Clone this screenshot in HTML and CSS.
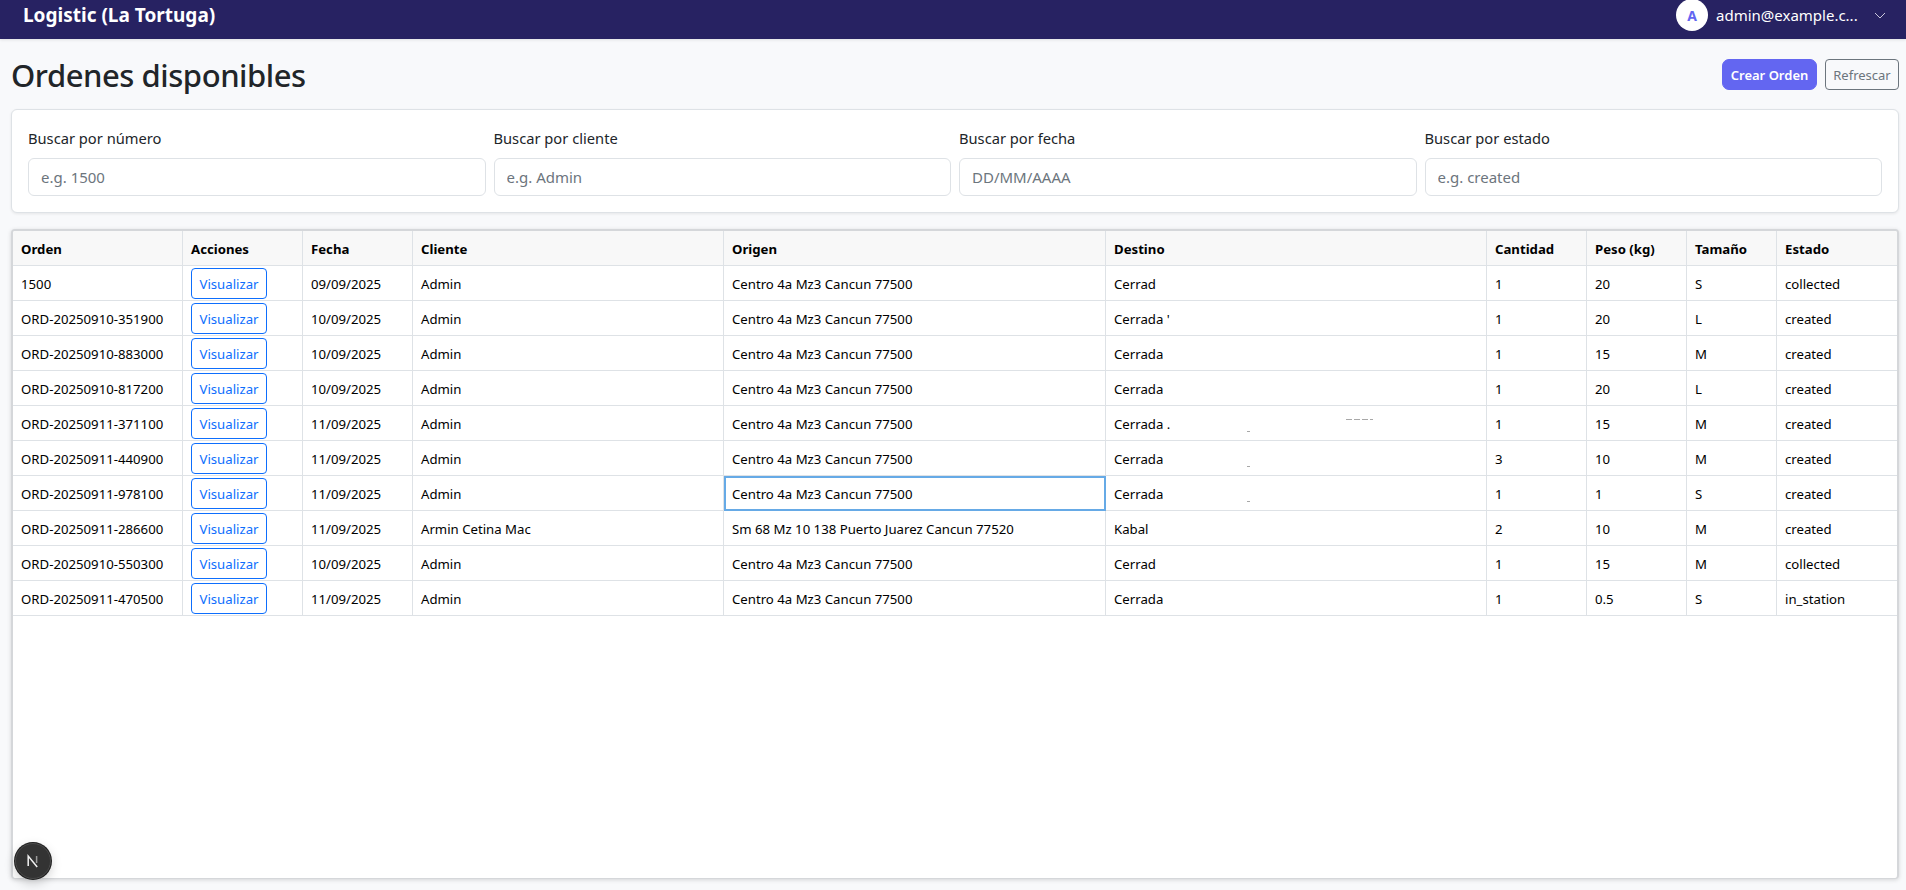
FILE: index.html
```html
<!DOCTYPE html>
<html lang="es">
<head>
    <meta charset="UTF-8">
    <meta name="viewport" content="width=device-width, initial-scale=1.0">
    <title>Logistic (La Tortuga)</title>
    <link rel="stylesheet" href="styles.css">
</head>
<body>
    <nav class="navbar">
        <div class="brand">Logistic (La Tortuga)</div>
        <div class="user-menu">
            <span class="avatar">A</span>
            <span class="user-email">admin@example.c...</span>
            <svg class="chevron" width="12" height="7" viewBox="0 0 12 7" fill="none" stroke="#c9c8dc" stroke-width="1"><path d="M1 1l5 5 5-5"/></svg>
        </div>
    </nav>

    <main class="page">
        <div class="page-header">
            <h1>Ordenes disponibles</h1>
            <div class="page-actions">
                <button class="btn-create">Crear Orden</button>
                <button class="btn-refresh">Refrescar</button>
            </div>
        </div>

        <div class="filters">
            <div class="filter-group">
                <label for="f-numero">Buscar por número</label>
                <input id="f-numero" type="text" placeholder="e.g. 1500">
            </div>
            <div class="filter-group">
                <label for="f-cliente">Buscar por cliente</label>
                <input id="f-cliente" type="text" placeholder="e.g. Admin">
            </div>
            <div class="filter-group">
                <label for="f-fecha">Buscar por fecha</label>
                <input id="f-fecha" type="text" placeholder="DD/MM/AAAA">
            </div>
            <div class="filter-group">
                <label for="f-estado">Buscar por estado</label>
                <input id="f-estado" type="text" placeholder="e.g. created">
            </div>
        </div>

        <div class="grid-card">
            <table class="orders">
                <colgroup>
                    <col class="c-orden"><col class="c-acciones"><col class="c-fecha"><col class="c-cliente">
                    <col class="c-origen"><col class="c-destino"><col class="c-cantidad"><col class="c-peso">
                    <col class="c-tamano"><col class="c-estado">
                </colgroup>
                <thead>
                    <tr>
                        <th>Orden</th><th>Acciones</th><th>Fecha</th><th>Cliente</th><th>Origen</th>
                        <th>Destino</th><th>Cantidad</th><th>Peso (kg)</th><th>Tamaño</th><th>Estado</th>
                    </tr>
                </thead>
                <tbody>
                    <tr><td>1500</td><td class="actions"><button class="btn-view">Visualizar</button></td><td>09/09/2025</td><td>Admin</td><td>Centro 4a Mz3 Cancun 77500</td><td>Cerrad</td><td>1</td><td>20</td><td>S</td><td>collected</td></tr>
                    <tr><td>ORD-20250910-351900</td><td class="actions"><button class="btn-view">Visualizar</button></td><td>10/09/2025</td><td>Admin</td><td>Centro 4a Mz3 Cancun 77500</td><td>Cerrada '</td><td>1</td><td>20</td><td>L</td><td>created</td></tr>
                    <tr><td>ORD-20250910-883000</td><td class="actions"><button class="btn-view">Visualizar</button></td><td>10/09/2025</td><td>Admin</td><td>Centro 4a Mz3 Cancun 77500</td><td>Cerrada</td><td>1</td><td>15</td><td>M</td><td>created</td></tr>
                    <tr><td>ORD-20250910-817200</td><td class="actions"><button class="btn-view">Visualizar</button></td><td>10/09/2025</td><td>Admin</td><td>Centro 4a Mz3 Cancun 77500</td><td>Cerrada</td><td>1</td><td>20</td><td>L</td><td>created</td></tr>
                    <tr><td>ORD-20250911-371100</td><td class="actions"><button class="btn-view">Visualizar</button></td><td>11/09/2025</td><td>Admin</td><td>Centro 4a Mz3 Cancun 77500</td><td class="dest">Cerrada .<i class="speck speck-low"></i><i class="speck speck-top"></i></td><td>1</td><td>15</td><td>M</td><td>created</td></tr>
                    <tr><td>ORD-20250911-440900</td><td class="actions"><button class="btn-view">Visualizar</button></td><td>11/09/2025</td><td>Admin</td><td>Centro 4a Mz3 Cancun 77500</td><td class="dest">Cerrada<i class="speck speck-low"></i></td><td>3</td><td>10</td><td>M</td><td>created</td></tr>
                    <tr><td>ORD-20250911-978100</td><td class="actions"><button class="btn-view">Visualizar</button></td><td>11/09/2025</td><td>Admin</td><td class="focused">Centro 4a Mz3 Cancun 77500</td><td class="dest">Cerrada<i class="speck speck-low"></i></td><td>1</td><td>1</td><td>S</td><td>created</td></tr>
                    <tr><td>ORD-20250911-286600</td><td class="actions"><button class="btn-view">Visualizar</button></td><td>11/09/2025</td><td>Armin Cetina Mac</td><td>Sm 68 Mz 10 138 Puerto Juarez Cancun 77520</td><td>Kabal</td><td>2</td><td>10</td><td>M</td><td>created</td></tr>
                    <tr><td>ORD-20250910-550300</td><td class="actions"><button class="btn-view">Visualizar</button></td><td>10/09/2025</td><td>Admin</td><td>Centro 4a Mz3 Cancun 77500</td><td>Cerrad</td><td>1</td><td>15</td><td>M</td><td>collected</td></tr>
                    <tr><td>ORD-20250911-470500</td><td class="actions"><button class="btn-view">Visualizar</button></td><td>11/09/2025</td><td>Admin</td><td>Centro 4a Mz3 Cancun 77500</td><td>Cerrada</td><td>1</td><td>0.5</td><td>S</td><td>in_station</td></tr>
                </tbody>
            </table>
        </div>
    </main>

    <div class="dev-badge">
        <svg width="16" height="16" viewBox="0 0 16 16" fill="none"><path d="M3.2 13V3l9 11" stroke="#f2f2f2" stroke-width="1.5"/><path d="M11.6 3v7" stroke="#9a9a9a" stroke-width="1.5"/></svg>
    </div>
</body>
</html>
```

FILE: styles.css
```css
* {
    margin: 0;
    padding: 0;
    box-sizing: border-box;
}

html, body {
    height: 100%;
    overflow: hidden;
}

body {
    font-family: 'Noto Sans', 'Open Sans', sans-serif;
    background: #f8f9fb;
    color: #212529;
    display: flex;
    flex-direction: column;
}

.navbar {
    height: 39px;
    flex-shrink: 0;
    background: #272262;
    color: #fff;
    display: flex;
    align-items: center;
    justify-content: space-between;
    padding: 0 20px 9px 23px;
    box-shadow: 0 1px 3px rgba(0, 0, 0, 0.1);
}

.brand {
    font-size: 19px;
    font-weight: 700;
}

.user-menu {
    display: flex;
    align-items: center;
    font-size: 15px;
}

.avatar {
    width: 32px;
    height: 32px;
    border-radius: 50%;
    background: #fff;
    color: #6366f1;
    font-size: 14px;
    font-weight: 700;
    display: flex;
    align-items: center;
    justify-content: center;
    margin-right: 8px;
}

.user-email {
    width: 141px;
    white-space: nowrap;
    margin-right: 17px;
}

.page {
    flex: 1;
    min-height: 0;
    display: flex;
    flex-direction: column;
    padding: 20px 7px 11px 11px;
}

.page-header {
    height: 31px;
    display: flex;
    align-items: center;
    justify-content: space-between;
    margin-bottom: 19px;
}

.page-header h1 {
    font-size: 31px;
    font-weight: 500;
    line-height: 1.2;
    letter-spacing: -0.45px;
    margin-top: 2px;
}

.page-actions {
    display: flex;
    gap: 8px;
}

.page-actions button {
    height: 31px;
    font-family: inherit;
    font-size: 13px;
    white-space: nowrap;
    border-radius: 7px;
}

.btn-create {
    width: 95px;
    background: #6366f1;
    border: 1px solid #6366f1;
    color: #fff;
    font-weight: 600;
}

.btn-refresh {
    width: 74px;
    background: transparent;
    border: 1px solid #6c757d;
    color: #6c757d;
    border-radius: 4px !important;
}

.filters {
    height: 104px;
    background: #fff;
    border: 1px solid #dee2e6;
    border-radius: 6px;
    box-shadow: 0 1px 3px rgba(0, 0, 0, 0.08);
    padding: 16px 16px 0;
    display: grid;
    grid-template-columns: repeat(4, 1fr);
    gap: 8px;
    margin-bottom: 16px;
}

.filter-group label {
    display: block;
    font-size: 14.7px;
    line-height: 24px;
    margin-bottom: 8px;
}

.filter-group input {
    width: 100%;
    height: 38px;
    font-family: inherit;
    font-size: 15px;
    padding: 0 12px;
    border: 1px solid #dee2e6;
    border-radius: 6px;
    background: #fff;
    outline: none;
}

.filter-group input::placeholder {
    color: #6c757d;
    opacity: 1;
}

.grid-card {
    flex: 1;
    min-height: 0;
    background: #fff;
    border: 2px solid #d5d7da;
    border-bottom-width: 1px;
    border-radius: 4px;
    box-shadow: 0 1px 4px rgba(0, 0, 0, 0.15);
    overflow: hidden;
}

.orders {
    width: 100%;
    table-layout: fixed;
    border-collapse: separate;
    border-spacing: 0;
    font-size: 13.2px;
    color: #000;
}

.c-orden { width: 170px; }
.c-acciones { width: 120px; }
.c-fecha { width: 110px; }
.c-cliente { width: 311px; }
.c-origen { width: 382px; }
.c-destino { width: 381px; }
.c-cantidad { width: 100px; }
.c-peso { width: 100px; }
.c-tamano { width: 90px; }
.c-estado { width: 120px; }

.orders th,
.orders td {
    height: 35px;
    padding: 2px 8px 0;
    text-align: left;
    white-space: nowrap;
    overflow: hidden;
    border-right: 1px solid #dee2e6;
    border-bottom: 1px solid #dee2e6;
}

.orders th {
    background: #f8f8f8;
    font-weight: 700;
}

.orders th:last-child,
.orders td:last-child {
    border-right: none;
}

.orders td.actions {
    padding: 0 8px;
}

.btn-view {
    display: block;
    width: 76px;
    height: 31px;
    padding-top: 2px;
    font-family: inherit;
    font-size: 13.2px;
    color: #0d6efd;
    background: #fff;
    border: 1px solid #0d6efd;
    border-radius: 4px;
}

.orders td.focused {
    outline: 2px solid #66aae6;
    outline-offset: -2px;
}

/* restos del texto tapado en destino */
.dest {
    position: relative;
}

.speck {
    position: absolute;
    height: 1px;
    background: #a8a8a8;
}

.speck-low {
    left: 141px;
    top: 25px;
    width: 3px;
}

.speck-top {
    left: 240px;
    top: 13px;
    width: 27px;
    background: repeating-linear-gradient(90deg, #a8a8a8 0 6px, transparent 6px 8px);
}

.dev-badge {
    position: absolute;
    left: 15px;
    bottom: 11px;
    width: 36px;
    height: 36px;
    border-radius: 50%;
    background: #333;
    border: 1px solid #4a4a4a;
    box-shadow: 0 0 0 1px #1f1f1f, 0 4px 12px rgba(0, 0, 0, 0.2);
    display: flex;
    align-items: center;
    justify-content: center;
}
```
